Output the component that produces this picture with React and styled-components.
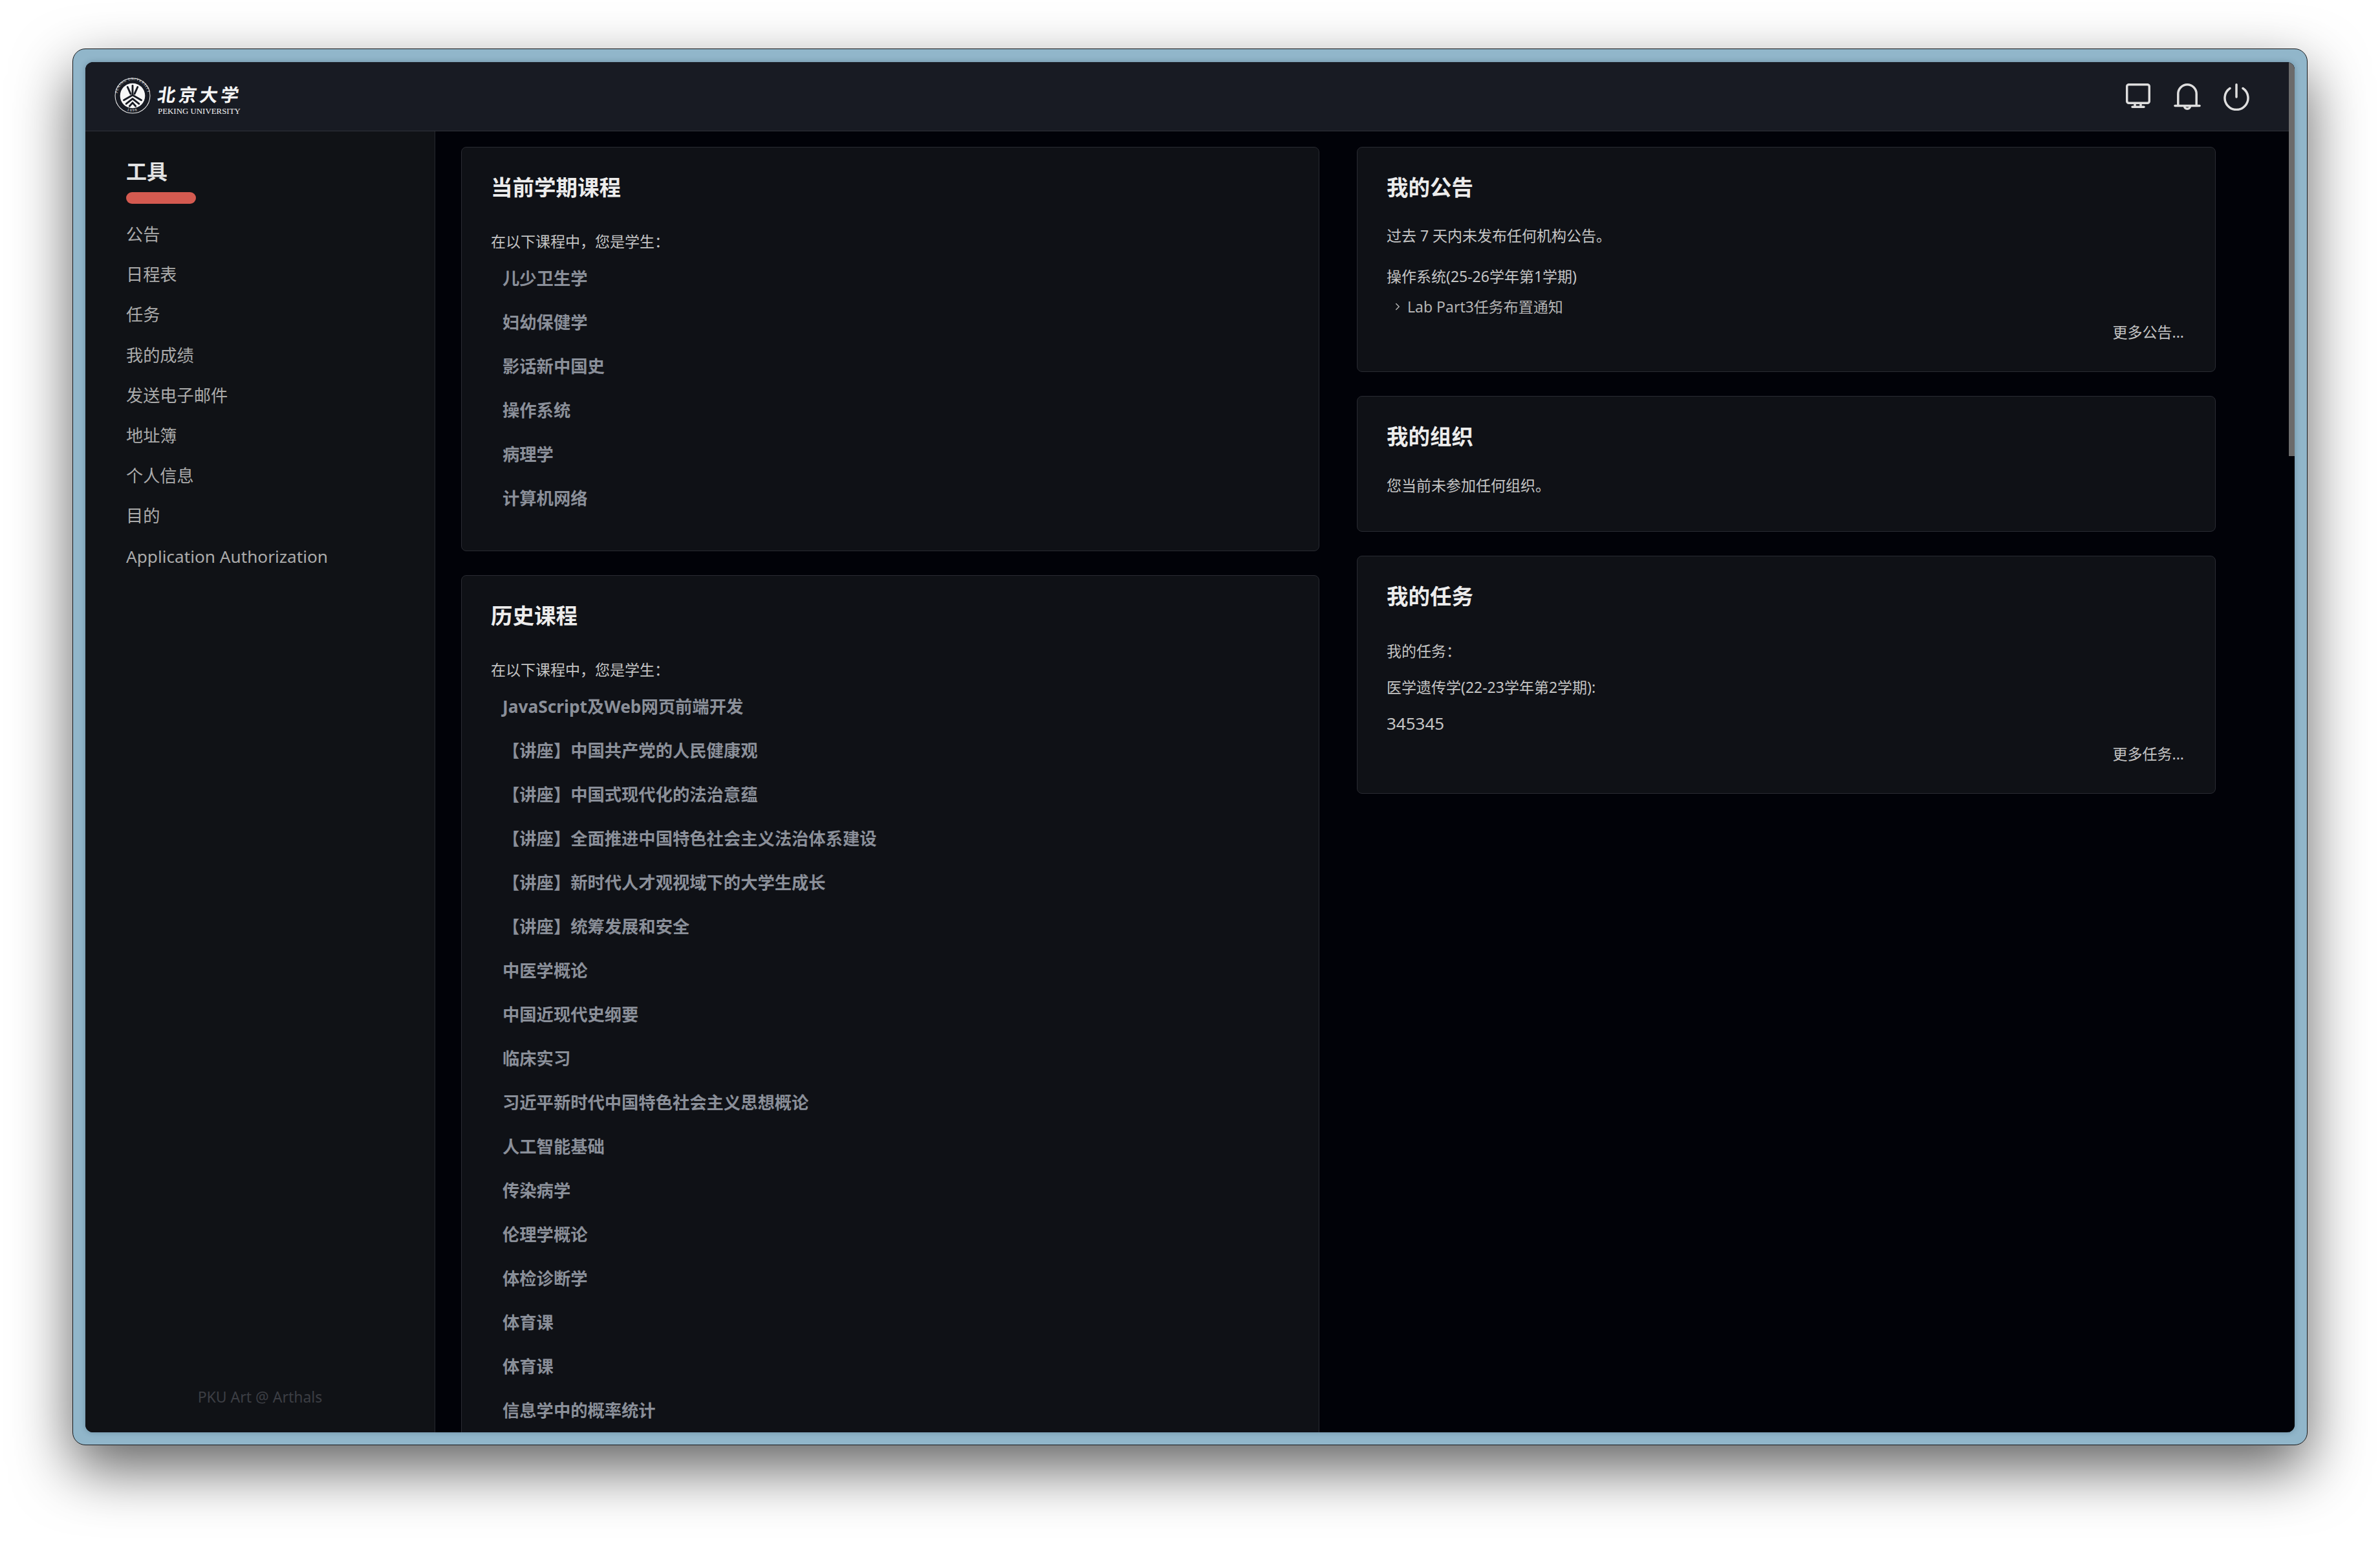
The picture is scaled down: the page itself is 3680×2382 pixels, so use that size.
import React from 'react'
import styled, { createGlobalStyle } from 'styled-components'
import { ChevronRight } from 'lucide-react'

const HEADER_HEIGHT = 107
const SIDE_BAR_WIDTH = 541

const TOOLS = ['公告', '日程表', '任务', '我的成绩', '发送电子邮件', '地址簿', '个人信息', '目的', 'Application Authorization']
const CURRENT_COURSES = ['儿少卫生学', '妇幼保健学', '影话新中国史', '操作系统', '病理学', '计算机网络']
const PAST_COURSES = [
  'JavaScript及Web网页前端开发',
  '【讲座】中国共产党的人民健康观',
  '【讲座】中国式现代化的法治意蕴',
  '【讲座】全面推进中国特色社会主义法治体系建设',
  '【讲座】新时代人才观视域下的大学生成长',
  '【讲座】统筹发展和安全',
  '中医学概论',
  '中国近现代史纲要',
  '临床实习',
  '习近平新时代中国特色社会主义思想概论',
  '人工智能基础',
  '传染病学',
  '伦理学概论',
  '体检诊断学',
  '体育课',
  '体育课',
  '信息学中的概率统计'
]

const App = () => (
  <>
    <GlobalStyle />
    <Stage>
      <Frame>
        <Screen>
          <Page>
            <Header>
              <Logo>
                <Seal />
                <LogoText>
                  <LogoName>北京大学</LogoName>
                  <LogoLatin>PEKING UNIVERSITY</LogoLatin>
                </LogoText>
              </Logo>
              <HeaderIcons>
                <IconSlot><MonitorIcon /></IconSlot>
                <IconSlot><BellIcon /></IconSlot>
                <IconSlot><PowerIcon /></IconSlot>
              </HeaderIcons>
            </Header>
            <Body>
              <SideBar>
                <SideTitle>工具</SideTitle>
                <SideAccent />
                {TOOLS.map((tool) => (
                  <SideItem key={tool}>{tool}</SideItem>
                ))}
                <SideFooter>PKU Art @ Arthals</SideFooter>
              </SideBar>
              <Main>
                <Column $width={1327}>
                  <Card>
                    <CardTitle>当前学期课程</CardTitle>
                    <Lead $top={49}>在以下课程中，您是学生：</Lead>
                    <CourseList>
                      {CURRENT_COURSES.map((name) => (
                        <Course key={name}>{name}</Course>
                      ))}
                    </CourseList>
                  </Card>
                  <Card>
                    <CardTitle>历史课程</CardTitle>
                    <Lead $top={49}>在以下课程中，您是学生：</Lead>
                    <CourseList>
                      {PAST_COURSES.map((name, i) => (
                        <Course key={name + i}>{name}</Course>
                      ))}
                    </CourseList>
                  </Card>
                </Column>
                <Column $width={1328}>
                  <Card>
                    <CardTitle>我的公告</CardTitle>
                    <Lead $top={40}>过去 7 天内未发布任何机构公告。</Lead>
                    <Lead $top={33}>操作系统(25-26学年第1学期)</Lead>
                    <Notice>
                      <ChevronRight size={18} strokeWidth={2} />
                      Lab Part3任务布置通知
                    </Notice>
                    <MoreLink $top={9}>更多公告...</MoreLink>
                  </Card>
                  <Card $bottom={56}>
                    <CardTitle>我的组织</CardTitle>
                    <Lead $top={41}>您当前未参加任何组织。</Lead>
                  </Card>
                  <Card>
                    <CardTitle>我的任务</CardTitle>
                    <Lead $top={50}>我的任务：</Lead>
                    <Lead $top={26}>医学遗传学(22-23学年第2学期):</Lead>
                    <TaskName>345345</TaskName>
                    <MoreLink $top={17}>更多任务...</MoreLink>
                  </Card>
                </Column>
              </Main>
            </Body>
          </Page>
          <ScrollTrack>
            <ScrollThumb />
          </ScrollTrack>
        </Screen>
      </Frame>
    </Stage>
  </>
)

const Seal = () => (
  <SealSvg viewBox='0 0 54 54'>
    <defs>
      <path id='rim-top' d='M5.2 33 A22.8 22.8 0 1 1 48.8 33' />
      <path id='rim-bottom' d='M14 46.5 A23.6 23.6 0 0 0 40 46.5' />
    </defs>
    <circle cx='27' cy='27' r='26' fill='none' stroke='#f2f2f2' strokeWidth='1' />
    <circle cx='27' cy='27' r='18.6' fill='#f7f7f7' />
    <text fontFamily='Liberation Serif, serif' fontSize='5.4' fill='#f2f2f2' letterSpacing='.7'>
      <textPath href='#rim-top' startOffset='50%' textAnchor='middle'>PEKING UNIVERSITY</textPath>
    </text>
    <text fontFamily='Liberation Serif, serif' fontSize='5.4' fill='#f2f2f2' letterSpacing='1.4'>
      <textPath href='#rim-bottom' startOffset='50%' textAnchor='middle'>1898</textPath>
    </text>
    <g fill='none' stroke='#181b23' strokeWidth='2.8' strokeLinecap='round'>
      <path d='M27 12 V25' />
      <path d='M19.5 14 L24 24 M34.5 14 L30 24' />
      <path d='M27 26 L14 33.5 M27 26 L40 33.5' />
      <path d='M27 31.5 L17.5 39 M27 31.5 L36.5 39' />
      <path d='M27 37.5 L22.5 42.5 M27 37.5 L31.5 42.5' />
    </g>
  </SealSvg>
)

const MonitorIcon = () => (
  <IconSvg width={38} height={38} viewBox='0 0 38 38'>
    <rect x='1.7' y='1.7' width='34.6' height='28.6' rx='3' />
    <path d='M14 31 V36 M23 31 V36 M10 36.2 H28' />
  </IconSvg>
)

const BellIcon = () => (
  <IconSvg width={42} height={42} viewBox='0 0 42 42'>
    <path d='M6.8 34 V16 a14.2 14.2 0 0 1 28.4 0 V34' />
    <path d='M2 34.4 H40' />
    <path d='M16.5 35.5 a4.6 4.6 0 0 0 9 0' />
  </IconSvg>
)

const PowerIcon = () => (
  <IconSvg width={40} height={42} viewBox='0 0 40 42'>
    <path d='M10 7.5 A18 18 0 1 0 30 7.5' />
    <path d='M20 1.8 V21' />
  </IconSvg>
)

const GlobalStyle = createGlobalStyle`
  html, body {
    margin: 0;
    background: #fff;
  }
  * {
    box-sizing: border-box;
  }
`

const Stage = styled.div`
  width: 3680px;
  height: 2382px;
  padding: 75px 112px 0;
  overflow: hidden;
  font-family: 'Noto Sans', 'Noto Sans CJK SC', sans-serif;
`

const Frame = styled.div`
  height: 2159px;
  padding: 20px 19px 19px;
  border: 1px solid #16181b;
  border-radius: 20px;
  background: #91b6ca;
  box-shadow: 0 36px 90px rgba(0, 0, 0, 0.62);
`

const Screen = styled.div`
  display: flex;
  height: 100%;
  border-radius: 12px;
  overflow: hidden;
  background: #010208;
  box-shadow: 0 0 8px rgba(40, 70, 90, 0.35);
`

const Page = styled.div`
  flex: 1;
  min-width: 0;
  display: flex;
  flex-direction: column;
`

const Header = styled.div`
  flex: none;
  height: ${HEADER_HEIGHT}px;
  display: flex;
  justify-content: space-between;
  align-items: center;
  padding: 2px 58px 0 45px;
  background: #181b23;
  border-bottom: 1px solid #30323a;
`

const Logo = styled.div`
  display: flex;
  align-items: center;
  gap: 11px;
`

const SealSvg = styled.svg`
  width: 56px;
  height: 56px;
  margin-bottom: 5px;
`

const LogoText = styled.div`
  display: flex;
  flex-direction: column;
  padding-top: 3px;
  color: #f4f4f4;
`

const LogoName = styled.span`
  font-family: 'Noto Sans CJK SC', sans-serif;
  font-size: 28px;
  line-height: 40px;
  font-weight: 700;
  letter-spacing: 4.6px;
  transform: skewX(-8deg);
`

const LogoLatin = styled.span`
  font-family: 'Liberation Serif', serif;
  font-size: 12.9px;
  line-height: 14px;
  white-space: nowrap;
`

const HeaderIcons = styled.div`
  display: flex;
  gap: 30px;
`

const IconSlot = styled.div`
  width: 46px;
  display: flex;
  justify-content: center;
`

const IconSvg = styled.svg`
  fill: none;
  stroke: #dedede;
  stroke-width: 3.5;
  stroke-linecap: round;
  stroke-linejoin: round;
`

const Body = styled.div`
  flex: 1;
  min-height: 0;
  display: flex;
`

const SideBar = styled.div`
  flex: none;
  width: ${SIDE_BAR_WIDTH}px;
  display: flex;
  flex-direction: column;
  padding: 42px 0 40px 63px;
  background: #101216;
  border-right: 1px solid #26282e;
`

const SideTitle = styled.div`
  font-size: 32px;
  line-height: 40px;
  font-weight: 700;
  color: #e2e2e2;
`

const SideAccent = styled.div`
  width: 108px;
  height: 18px;
  margin: 12px 0 16px;
  border-radius: 9px;
  background: #d45a50;
`

const SideItem = styled.div`
  font-size: 26.2px;
  line-height: 62.2px;
  color: #ababab;
`

const SideFooter = styled.div`
  margin-top: auto;
  margin-left: -63px;
  text-align: center;
  font-size: 23px;
  line-height: 30px;
  color: #3c3e44;
`

const Main = styled.div`
  flex: 1;
  min-width: 0;
  display: flex;
  align-items: flex-start;
  gap: 58px;
  padding: 24px 0 0 40px;
  overflow: hidden;
`

const Column = styled.div`
  flex: none;
  width: ${({ $width }) => $width}px;
  display: flex;
  flex-direction: column;
  gap: 37px;
`

const Card = styled.div`
  padding: 41px 48px ${({ $bottom }) => $bottom ?? 46}px 45px;
  background: #0f1116;
  border: 1px solid #292b32;
  border-radius: 8px;
`

const CardTitle = styled.div`
  font-size: 33.5px;
  line-height: 40px;
  font-weight: 700;
  color: #ececec;
`

const Lead = styled.div`
  margin-top: ${({ $top }) => $top}px;
  font-size: 23px;
  line-height: 30px;
  color: #c4c4c4;
`

const CourseList = styled.div`
  margin: 8px 0 1px;
  padding-left: 18px;
`

const Course = styled.div`
  font-size: 26.3px;
  line-height: 68px;
  font-weight: 700;
  color: #8a8f99;
`

const Notice = styled.div`
  display: flex;
  align-items: center;
  gap: 6px;
  margin-top: 17px;
  padding-left: 8px;
  font-size: 23px;
  line-height: 30px;
  color: #b4b4b4;
`

const TaskName = styled.div`
  margin-top: 26px;
  font-size: 26px;
  line-height: 30px;
  color: #c4c4c4;
`

const MoreLink = styled.div`
  margin-top: ${({ $top }) => $top}px;
  text-align: right;
  font-size: 23px;
  line-height: 30px;
  color: #c4c4c4;
`

const ScrollTrack = styled.div`
  flex: none;
  width: 9px;
  background: #010208;
`

const ScrollThumb = styled.div`
  height: 609px;
  background: #6b6b6b;
`

export default App
